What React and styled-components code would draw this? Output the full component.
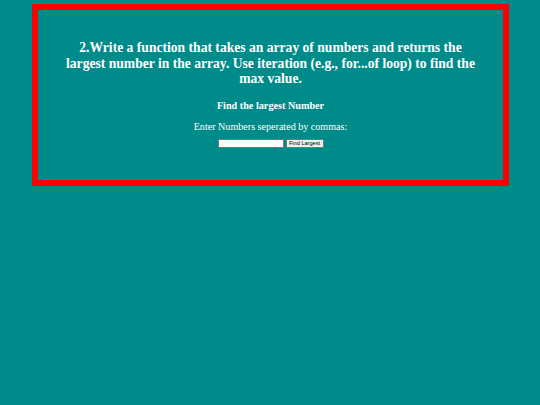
import React from "react";
import styled, { createGlobalStyle } from "styled-components";

const Global = createGlobalStyle`
  html, body {
    margin: 0;
    padding: 0;
    background: #008b8b;
  }
  body {
    padding-top: 4px;
    font-family: "Liberation Serif", "Times New Roman", serif;
    color: #ffffff;
  }
`;

const Card = styled.div`
  margin: 0 31px 0 32px;
  border: 6px solid #ff0000;
  padding: 30px 26px 32px;
  text-align: center;
`;

const Title = styled.h2`
  margin: 0;
  font-size: 13.6px;
  line-height: 15.5px;
  font-weight: bold;
`;

const Subtitle = styled.h3`
  margin: 13px 0 0;
  font-size: 10.2px;
  line-height: 11px;
  font-weight: bold;
`;

const Label = styled.p`
  margin: 10px 0 0;
  font-size: 10.1px;
  line-height: 12px;
`;

const Form = styled.div`
  margin-top: 6px;
  display: flex;
  justify-content: center;
  align-items: center;
  gap: 2px;
`;

const Input = styled.input`
  box-sizing: border-box;
  width: 66px;
  height: 9px;
  padding: 0;
  border: 1px solid #767676;
  background: #fff;
  font-size: 6px;
`;

const Button = styled.button`
  box-sizing: border-box;
  width: 38px;
  height: 9px;
  padding: 0;
  border: 1px solid #767676;
  border-radius: 1px;
  background: #efefef;
  color: #000;
  font-family: "Liberation Sans", Arial, sans-serif;
  font-size: 5.6px;
  line-height: 7px;
`;

export default function App() {
  return (
    <>
      <Global />
      <Card>
        <Title>
          2.Write a function that takes an array of numbers and returns the
          largest number in the array. Use iteration (e.g., for...of loop) to
          find the max value.
        </Title>
        <Subtitle>Find the largest Number</Subtitle>
        <Label>Enter Numbers seperated by commas:</Label>
        <Form>
          <Input type="text" />
          <Button>Find Largest</Button>
        </Form>
      </Card>
    </>
  );
}
